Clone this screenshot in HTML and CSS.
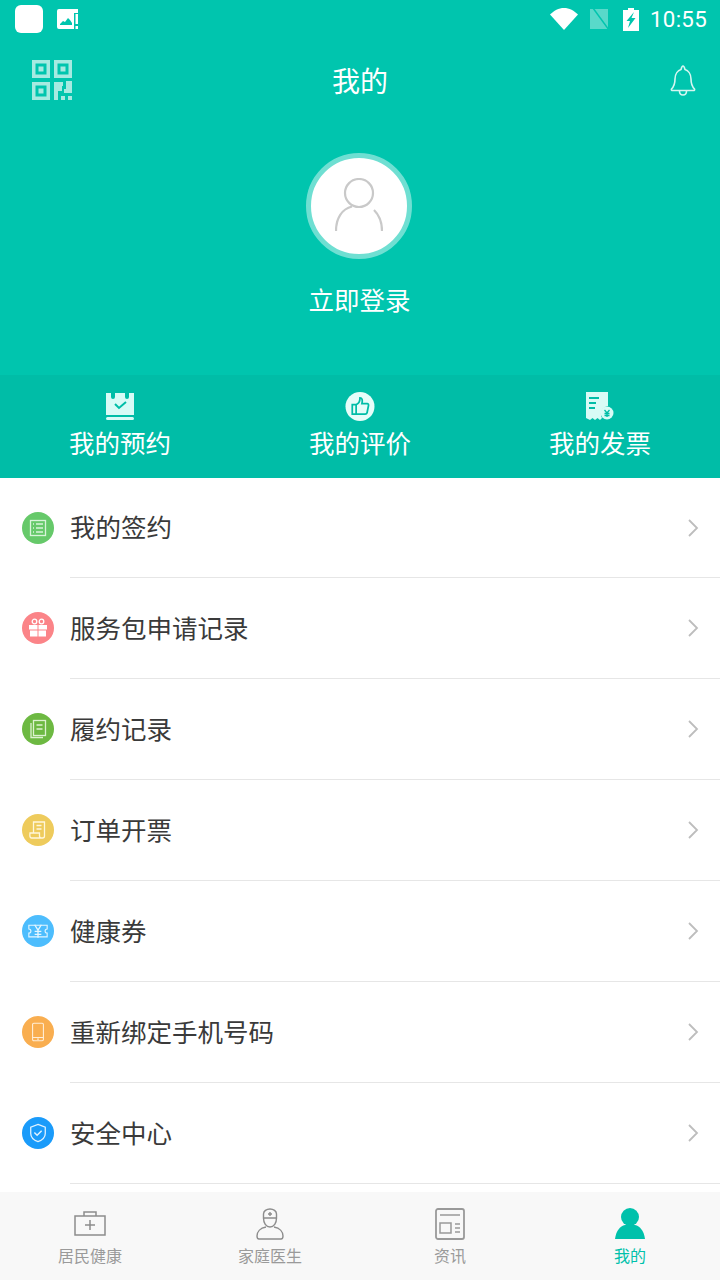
FILE: index.html
```html
<!DOCTYPE html>
<html lang="zh-CN">
<head>
<meta charset="utf-8">
<title>我的</title>
<link rel="stylesheet" href="styles.css">
</head>
<body>
<div class="page">
  <header class="hero">
    <div class="status">
      <div class="status-left">
        <span class="app-dot"></span>
        <svg class="s-img" viewBox="0 0 22 21"><path fill="#fff" d="M2 0h19v4h-4v12h0v4H2a2 2 0 0 1-2-2V2a2 2 0 0 1 2-2z"/><path fill="#00c5ae" d="M3 15l3-3 2 1 3-4 2 2 2 3v2H3z"/><rect x="18.500" y="5" width="2.500" height="10" fill="#fff"/><rect x="18.500" y="17" width="2.500" height="3" fill="#fff"/></svg>
      </div>
      <div class="status-right">
        <svg class="s-wifi" viewBox="0 0 28 22"><path fill="#fff" d="M14 22L0 6.500C3.800 2.700 8.700 0 14 0s10.200 2.700 14 6.500z"/></svg>
        <svg class="s-sim" viewBox="0 0 20 22"><path fill="#fff" fill-opacity=".35" d="M1 1h18v20H1z"/><path stroke="#00c5ae" stroke-width="1.500" d="M4 0l16 22"/></svg>
        <svg class="s-bat" viewBox="0 0 16 23"><path fill="#fff" d="M5 0h6v2h5v21H0V2h5z"/><path fill="#00c5ae" d="M11 4L3.500 13H7l-2 7 7.500-10H8.500z"/></svg>
        <span class="clock">10:55</span>
      </div>
    </div>
    <div class="nav">
      <svg class="qr" viewBox="0 0 40 40" fill="none" stroke="#a6eae1" stroke-width="3.500">
        <rect x="1.750" y="1.750" width="14.500" height="14.500"/><rect x="23.750" y="1.750" width="14.500" height="14.500"/><rect x="1.750" y="23.750" width="14.500" height="14.500"/>
        <g fill="#a6eae1" stroke="none"><rect x="6.500" y="6.500" width="5" height="5"/><rect x="28.500" y="6.500" width="5" height="5"/><rect x="6.500" y="28.500" width="5" height="5"/><path d="M22 22h9v4h-1v5h-4v9h-4z"/><path d="M34 21h6v12h-8v-4h2z"/><rect x="29" y="36" width="4" height="4"/><rect x="36" y="36" width="4" height="4"/></g>
      </svg>
      <h1 class="title">我的</h1>
      <svg class="bell" viewBox="0 0 26 32" fill="none" stroke="#d6f6f1" stroke-width="1.600"><path d="M1.500 25c3-3 3.500-5 3.500-10 0-5 3-8.500 6-9.500C11.500 3.500 12 2 13 2s1.500 1.500 2 3.500c3 1 6 4.500 6 9.500 0 5 .5 7 3.500 10 .5 1-.3 1.500-1 1.500H2.500c-.7 0-1.500-.5-1-1.500z"/><path d="M9.500 27c0 3 2 4 3.500 4s3.500-1 3.500-4"/></svg>
    </div>
    <div class="avatar">
      <svg class="avatar-icon" viewBox="0 0 48 54" fill="none" stroke="#c9c9c9" stroke-width="2.200"><circle cx="24" cy="15" r="14"/><path d="M1 53c0-13 6-22 16-24.500M39 32c5 5 8 12 8 21"/></svg>
    </div>
    <div class="login">立即登录</div>
  </header>

  <nav class="band">
    <a class="band-item">
      <svg class="band-icon" viewBox="0 0 30 29"><path fill="#d8fbf6" d="M1 1h5v4a2 2 0 0 0 4 0V1h10v4a2 2 0 0 0 4 0V1h5v22H1z"/><path fill="none" stroke="#00bda7" stroke-width="2" d="M10 12l4 4 7-6"/><rect x="1" y="25" width="28" height="3" rx="1.500" fill="#d8fbf6"/></svg>
      <span>我的预约</span>
    </a>
    <a class="band-item">
      <svg class="band-icon" viewBox="0 0 30 30"><circle cx="15" cy="15" r="15" fill="#e6fdf9"/><path fill="none" stroke="#00bda7" stroke-width="1.800" d="M7 13h4v10H7zM11 13c3-1 4-4 4-7 2 0 3 2 2 6h5.500c1 0 1.500 1 1.300 2l-1.500 7.500c-.2 1-1 1.500-2 1.500H11"/></svg>
      <span>我的评价</span>
    </a>
    <a class="band-item">
      <svg class="band-icon" viewBox="0 0 30 29"><path fill="#d8fbf6" d="M1 0h22v14a8 8 0 0 0-6 12l-2 2-2.500-2-2.500 2-2.500-2L5 28l-4-2z"/><path stroke="#00bda7" stroke-width="1.800" d="M4 6h10M4 11h7M4 16h6"/><circle cx="22" cy="21" r="6.500" fill="#d8fbf6"/><path stroke="#00bda7" stroke-width="1.300" fill="none" d="M19.500 18l2.500 3 2.500-3M19.500 21.500h5M19.500 23.500h5M22 21v4"/></svg>
      <span>我的发票</span>
    </a>
  </nav>

  <main class="list">
    <a class="row">
      <span class="badge badge-green"><svg viewBox="0 0 20 20" fill="none" stroke="#d9f4da" stroke-width="1.300"><rect x="2.500" y="2.500" width="15" height="15"/><path d="M5 6h1M8 6h7M5 10h1M8 10h7M5 14h1M8 14h7"/></svg></span>
      <span class="row-body"><span class="row-text">我的签约</span><svg class="chev" viewBox="0 0 12 20"><path d="M2 2l8 8-8 8"/></svg></span>
    </a>
    <a class="row">
      <span class="badge badge-pink"><svg viewBox="0 0 20 20" fill="#fff"><rect x="1" y="7" width="8.500" height="4.500"/><rect x="10.500" y="7" width="8.500" height="4.500"/><rect x="2" y="12.500" width="7.500" height="6"/><rect x="10.500" y="12.500" width="7.500" height="6"/><circle cx="6.500" cy="3.500" r="2.300" fill="none" stroke="#fff" stroke-width="1.300"/><circle cx="13.500" cy="3.500" r="2.300" fill="none" stroke="#fff" stroke-width="1.300"/></svg></span>
      <span class="row-body"><span class="row-text">服务包申请记录</span><svg class="chev" viewBox="0 0 12 20"><path d="M2 2l8 8-8 8"/></svg></span>
    </a>
    <a class="row">
      <span class="badge badge-leaf"><svg viewBox="0 0 20 20" fill="none" stroke="#dcf2cf" stroke-width="1.300"><rect x="5.500" y="1.500" width="12" height="15"/><path d="M8.500 6h6M8.500 10h6M3 4v14.500h12"/></svg></span>
      <span class="row-body"><span class="row-text">履约记录</span><svg class="chev" viewBox="0 0 12 20"><path d="M2 2l8 8-8 8"/></svg></span>
    </a>
    <a class="row">
      <span class="badge badge-yellow"><svg viewBox="0 0 20 20" fill="none" stroke="#fff7dc" stroke-width="1.300"><path d="M5.500 13V2h11v14c0 1.500-1 2-2 2H3.500C2 18 1.500 16.500 2 13h9.500v3c0 1.500 1 2 2 2"/><path d="M8.500 5.500h5M8.500 9h5"/></svg></span>
      <span class="row-body"><span class="row-text">订单开票</span><svg class="chev" viewBox="0 0 12 20"><path d="M2 2l8 8-8 8"/></svg></span>
    </a>
    <a class="row">
      <span class="badge badge-sky"><svg viewBox="0 0 24 20" fill="none" stroke="#e4f6ff" stroke-width="1.300"><path d="M1 3h22v4.500a2.500 2.500 0 0 0 0 5V17H1v-4.500a2.500 2.500 0 0 0 0-5z"/><path stroke-width="1.600" d="M8 2.500l4 6.500 4-6.500M12 9v9M8 10.500h8M8 14h8"/></svg></span>
      <span class="row-body"><span class="row-text">健康券</span><svg class="chev" viewBox="0 0 12 20"><path d="M2 2l8 8-8 8"/></svg></span>
    </a>
    <a class="row">
      <span class="badge badge-orange"><svg viewBox="0 0 20 24" fill="none" stroke="#ffeed8" stroke-width="1.300"><rect x="3.500" y="1.500" width="13" height="21" rx="1.500"/><path d="M3.500 18.500h13M9 20.500h2"/></svg></span>
      <span class="row-body"><span class="row-text">重新绑定手机号码</span><svg class="chev" viewBox="0 0 12 20"><path d="M2 2l8 8-8 8"/></svg></span>
    </a>
    <a class="row">
      <span class="badge badge-blue"><svg viewBox="0 0 20 22" fill="none" stroke="#e0f2ff" stroke-width="1.400"><path d="M10 1.500l8 3v7c0 4.500-4 7.500-8 9-4-1.500-8-4.500-8-9v-7z"/><path stroke-width="1.600" d="M6 10.500l3 3 5-5"/></svg></span>
      <span class="row-body"><span class="row-text">安全中心</span><svg class="chev" viewBox="0 0 12 20"><path d="M2 2l8 8-8 8"/></svg></span>
    </a>
  </main>

  <footer class="tabs">
    <a class="tab">
      <svg class="tab-icon" viewBox="0 0 32 30" fill="none" stroke="#8c8c8c" stroke-width="1.500"><rect x="1" y="7" width="30" height="19"/><path d="M10 7V3h12v4M16 11v10M11 16h10"/></svg>
      <span>居民健康</span>
    </a>
    <a class="tab">
      <svg class="tab-icon" viewBox="0 0 32 32" fill="none" stroke="#8c8c8c" stroke-width="1.400"><path d="M9.500 10V6c0-3 3-5 6.500-5s6.500 2 6.500 5v4zM9.500 10c0 5 2.500 9 6.500 9s6.500-4 6.500-9M16 4v4M14 6h4"/><path d="M12 19c-6 1-9 5-9 9 0 2 1 3 2 3h22c1 0 2-1 2-3 0-4-3-8-9-9"/></svg>
      <span>家庭医生</span>
    </a>
    <a class="tab">
      <svg class="tab-icon" viewBox="0 0 30 32" fill="none" stroke="#999" stroke-width="1.500"><rect x="1" y="1" width="28" height="30" rx="2" stroke-width="1.800"/><path d="M5 7h20M20 16h5M20 20h5M20 24h5"/><rect x="5" y="15" width="11" height="10"/></svg>
      <span>资讯</span>
    </a>
    <a class="tab tab-on">
      <svg class="tab-icon" viewBox="0 0 30 32" fill="#00c1ab"><circle cx="15" cy="9" r="9"/><path d="M0 31c1-8 5-13 10-14h10c5 1 9 6 10 14z"/></svg>
      <span>我的</span>
    </a>
  </footer>
</div>
</body>
</html>
```

FILE: styles.css
```css
* { box-sizing: border-box; }
html, body { margin: 0; padding: 0; }
body { font-family: "Noto Sans CJK SC", "Noto Sans", sans-serif; background: #fff; }
a { color: inherit; text-decoration: none; }
svg { display: block; flex: none; }

.page { width: 720px; height: 1280px; display: flex; flex-direction: column; overflow: hidden; }

.hero { height: 375px; flex: none; background: #00c5ae; color: #fff; display: flex; flex-direction: column; align-items: center; }

.status { width: 100%; height: 40px; padding: 5px 13px 0 15px; display: flex; justify-content: space-between; align-items: flex-start; }
.status-left { display: flex; gap: 14px; align-items: center; }
.app-dot { width: 28px; height: 28px; border-radius: 6px; background: #fff; }
.s-img { width: 22px; height: 21px; }
.status-right { display: flex; align-items: center; height: 28px; }
.s-wifi { width: 28px; height: 22px; margin-right: 11px; }
.s-sim { width: 20px; height: 22px; margin-right: 14px; }
.s-bat { width: 16px; height: 23px; margin-right: 11px; }
.clock { font-family: Roboto, sans-serif; font-size: 22.300px; line-height: 28px; letter-spacing: .3px; }

.nav { width: 100%; height: 40px; margin-top: 20px; padding: 0 24px 0 32px; display: flex; justify-content: space-between; align-items: center; position: relative; }
.qr { width: 40px; height: 40px; }
.title { margin: 0; font-size: 28px; font-weight: 400; line-height: 40px; position: absolute; left: 0; right: 0; text-align: center; }
.bell { width: 26px; height: 32px; }

.avatar { width: 106px; height: 106px; margin-top: 53px; margin-left: -2px; border-radius: 50%; background: #fff; border: 5px solid #6fdfd2; display: flex; align-items: center; justify-content: center; }
.avatar-icon { width: 48px; height: 54px; margin-top: -3px; }

.login { font-size: 25.500px; line-height: 36px; margin-top: 22px; margin-left: -1px; }

.band { height: 103px; flex: none; background: #00bda7; color: #fff; display: grid; grid-template-columns: repeat(3, 240px); }
.band-item { display: flex; flex-direction: column; align-items: center; padding-top: 17px; font-size: 25.500px; line-height: 36px; }
.band-icon { width: 30px; height: 29px; margin-bottom: 3px; }

.list { flex: 1; min-height: 0; overflow: hidden; background: #fff; }
.row { height: 101px; display: flex; align-items: stretch; padding-left: 22px; color: #3a3a3a; }
.row:first-child { height: 100px; }
.badge { width: 32px; height: 32px; border-radius: 50%; flex: none; margin-top: 34px; margin-right: 16px; display: flex; align-items: center; justify-content: center; }
.badge svg { width: 20px; height: 20px; }
.badge-green { background: #66c96a; }
.badge-pink { background: #fb8488; }
.badge-leaf { background: #6db942; }
.badge-yellow { background: #eecb5c; }
.badge-sky { background: #4dbdfd; }
.badge-orange { background: #f9ae50; }
.badge-blue { background: #1a9bfa; }
.row-body { flex: 1; display: flex; align-items: center; justify-content: space-between; padding: 0 21px 3px 0; border-bottom: 1px solid #e6e6e6; }
.row-text { font-size: 25.500px; line-height: 36px; }
.chev { width: 12px; height: 20px; fill: none; stroke: #bdbdbd; stroke-width: 1.800; margin-top: 3px; }

.tabs { height: 88px; flex: none; background: #f8f8f8; display: grid; grid-template-columns: repeat(4, 180px); }
.tab { display: flex; flex-direction: column; align-items: center; color: #9a9a9a; font-size: 16px; line-height: 24px; padding-top: 16px; }
.tab-icon { width: 32px; height: 32px; margin-bottom: 3px; }
.tab-on { color: #00c1ab; }
```
